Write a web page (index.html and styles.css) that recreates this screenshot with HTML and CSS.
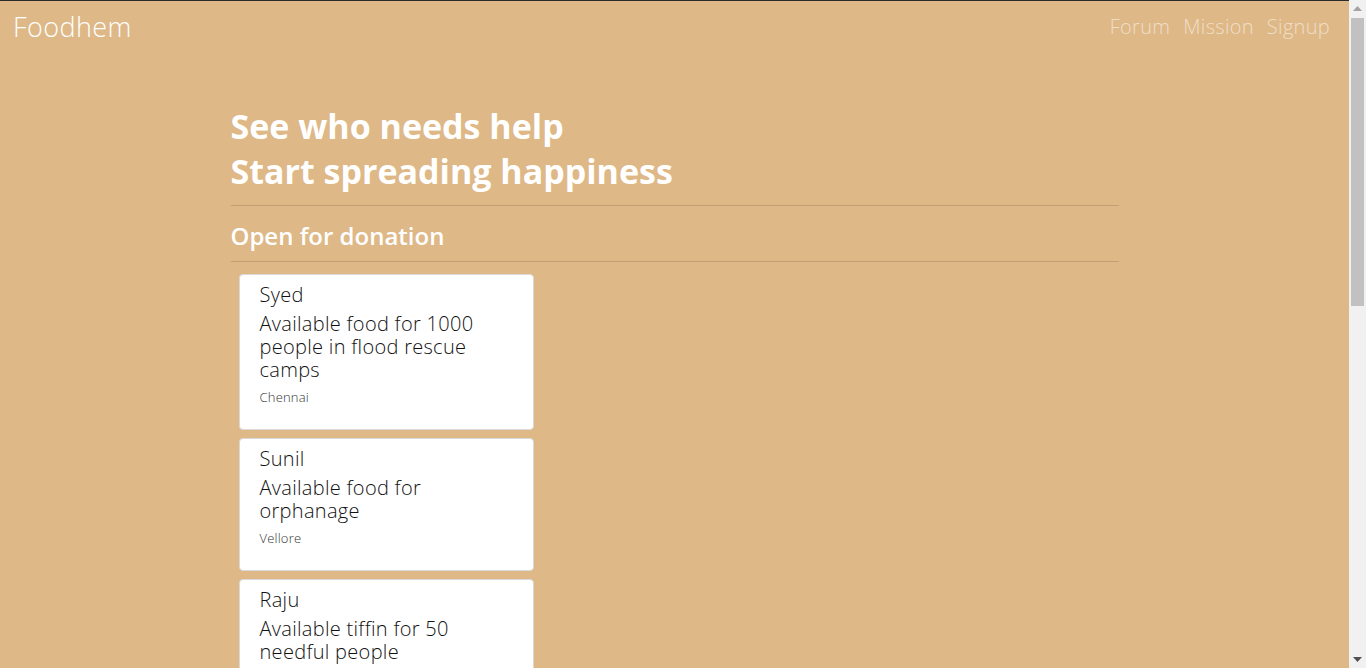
FILE: index.html
```html
<!DOCTYPE html>
<html lang="en">
<head>
<meta charset="utf-8">
<title>Foodhem</title>
<link rel="stylesheet" href="styles.css">
</head>
<body>
<nav class="navbar">
  <a class="brand" href="#">Foodhem</a>
  <ul class="nav-links">
    <li><a href="#">Forum</a></li>
    <li><a href="#">Mission</a></li>
    <li><a href="#">Signup</a></li>
  </ul>
</nav>
<main class="container">
  <h1 class="hero">See who needs help<br>Start spreading happiness</h1>
  <hr class="rule">
  <h2 class="section-title">Open for donation</h2>
  <hr class="rule">
  <div class="cards">
    <div class="card">
      <div class="card-name">Syed</div>
      <div class="card-text">Available food for 1000 people in flood rescue camps</div>
      <div class="card-place">Chennai</div>
    </div>
    <div class="card">
      <div class="card-name">Sunil</div>
      <div class="card-text">Available food for orphanage</div>
      <div class="card-place">Vellore</div>
    </div>
    <div class="card">
      <div class="card-name">Raju</div>
      <div class="card-text">Available tiffin for 50 needful people</div>
      <div class="card-place">Katpadi</div>
    </div>
  </div>
</main>
<div class="scrollbar" aria-hidden="true">
  <div class="sb-btn">
    <svg width="9" height="5" viewBox="0 0 9 5"><polygon points="0,5 4.5,0 9,5" fill="#a3a3a3"/></svg>
  </div>
  <div class="sb-track"><div class="sb-thumb"></div></div>
  <div class="sb-btn">
    <svg width="9" height="5" viewBox="0 0 9 5"><polygon points="0,0 4.5,5 9,0" fill="#505050"/></svg>
  </div>
</div>
</body>
</html>
```
FILE: styles.css
```css
html {
  background: #deb887;
}
body {
  margin: 0;
  padding-right: 17px;
  background: #deb887;
  border-top: 1px solid #2b2b2b;
  font-family: "Open Sans", "Noto Sans", sans-serif;
  color: #111;
}
.scrollbar {
  position: fixed;
  top: 0;
  right: 0;
  bottom: 0;
  width: 17px;
  background: #f1f1f1;
  display: flex;
  flex-direction: column;
}
.sb-btn {
  height: 17px;
  display: flex;
  align-items: center;
  justify-content: center;
  flex: none;
}
.sb-track {
  flex: 1;
  padding: 1px 2px 0;
}
.sb-thumb {
  height: 288px;
  background: #c1c1c1;
}
.navbar {
  display: flex;
  align-items: center;
  justify-content: space-between;
  height: 50px;
  padding: 0 19px 7px 13px;
}
.brand {
  color: #fff;
  text-decoration: none;
  font-size: 27px;
  font-weight: 300;
  letter-spacing: 0.4px;
}
.nav-links {
  display: flex;
  list-style: none;
  margin: 0;
  padding: 0;
  gap: 13px;
}
.nav-links a {
  color: rgba(255, 255, 255, 0.55);
  text-decoration: none;
  font-size: 20px;
  font-weight: 300;
  letter-spacing: 0.3px;
}
.container {
  width: 888px;
  margin: 0 auto;
  padding-top: 46px;
  padding-bottom: 40px;
}
.hero {
  margin: 0 0 11px;
  color: #fff;
  font-family: "Open Sans", sans-serif;
  font-weight: 700;
  font-size: 34px;
  line-height: 45px;
}
.rule {
  margin: 0;
  border: 0;
  border-top: 1px solid rgba(0, 0, 0, 0.12);
}
.section-title {
  margin: 0;
  padding: 14px 0 10px;
  color: #fff;
  font-weight: 600;
  font-size: 24px;
  line-height: 31px;
}
.cards {
  display: flex;
  flex-direction: column;
  gap: 8px;
  padding: 12px 0 0 8px;
}
.card {
  width: 253px;
  background: #fff;
  border: 1px solid #d9d9d9;
  border-radius: 4px;
  padding: 9px 20px 23px;
}
.card-name {
  font-size: 20px;
  line-height: 22px;
  font-weight: 300;
  letter-spacing: 0.3px;
  color: #111;
}
.card-text {
  margin-top: 6px;
  font-size: 20px;
  line-height: 23px;
  font-weight: 300;
  letter-spacing: 0.3px;
  color: #111;
}
.card-place {
  margin-top: 7px;
  font-size: 13px;
  line-height: 18px;
  font-weight: 300;
  letter-spacing: 0.2px;
  color: #333;
}
```
